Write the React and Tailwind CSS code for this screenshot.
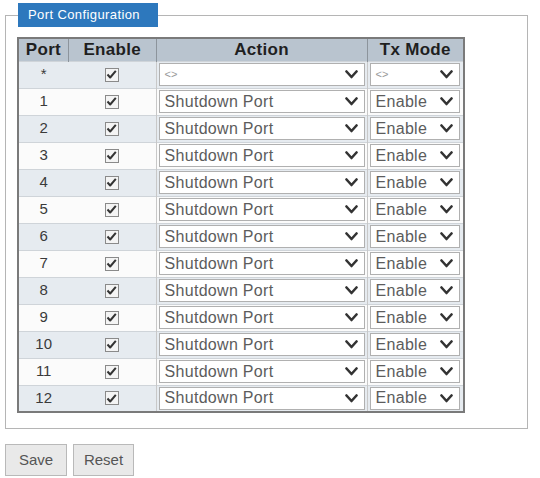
import React from 'react';

const ports = ['*', '1', '2', '3', '4', '5', '6', '7', '8', '9', '10', '11', '12'];

const Chevron = () => (
  <svg className="w-[13px] h-[9px]" viewBox="0 0 13 9" fill="none">
    <polyline points="1.5,1.5 6.5,7 11.5,1.5" stroke="#333" strokeWidth="2.6" strokeLinecap="round" strokeLinejoin="round" />
  </svg>
);

const CheckBox = () => (
  <span className="inline-flex h-[14px] w-[14px] items-center justify-center border border-[#8a8a8a] bg-[#f4f4f4]">
    <svg className="w-[11px] h-[11px]" viewBox="0 0 11 11" fill="none">
      <polyline points="1.5,5.5 4.2,8.5 9.8,1.8" stroke="#333" strokeWidth="2" strokeLinejoin="round" />
    </svg>
  </span>
);

const FakeSelect = ({ value, width, textClass }) => (
  <div className={`flex h-[23px] items-center justify-between border border-[#b0b0b0] bg-white pl-[5px] pr-[6px] ${width}`}>
    <span className={`leading-none ${textClass}`}>{value}</span>
    <Chevron />
  </div>
);

export default function App() {
  return (
    <div className="min-h-screen bg-white px-[5px] pt-[3px] font-['Liberation_Sans',Arial,sans-serif]">
      <fieldset className="w-[523px] border border-[#b5b5b5] pl-[11px] pb-[15px]">
        <legend className="ml-[1px] h-[24px] w-[140px] bg-[#2d78bd] pl-[10px] text-[13px] leading-[24px] tracking-[0.4px] text-white">
          Port Configuration
        </legend>

        <table className="mt-[10px] w-[448px] border-collapse border-2 border-[#7a7a7a]">
          <thead>
            <tr className="h-[23px] bg-[#b9c4cf] text-[17px] font-bold leading-none tracking-[0.3px] text-[#1f1f1f]">
              <th className="w-[51px] border-r border-[#8c949c] p-0">Port</th>
              <th className="w-[89px] border-r border-[#8c949c] p-0">Enable</th>
              <th className="w-[211px] border-r border-[#8c949c] p-0">Action</th>
              <th className="w-[97px] p-0">Tx Mode</th>
            </tr>
          </thead>
          <tbody>
            {ports.map((port, i) => (
              <tr key={port} className={`h-[27px] border-t border-[#cfd4d9] ${i % 2 === 0 ? 'bg-[#e6ebf0]' : 'bg-[#fbfbfb]'}`}>
                <td className="p-0 text-center text-[15px] text-[#3a3a3a]">{port}</td>
                <td className="p-0 text-center">
                  <div className="flex justify-center">
                    <CheckBox />
                  </div>
                </td>
                <td className="border-l border-[#c8c8c8] px-[2px] py-0">
                  <FakeSelect
                    value={port === '*' ? '<>' : 'Shutdown Port'}
                    width="w-[206px]"
                    textClass={port === '*' ? 'text-[11px] text-[#999]' : 'text-[16px] tracking-[0.3px] text-[#5c5c5c]'}
                  />
                </td>
                <td className="border-l border-[#c8c8c8] px-[2px] py-0">
                  <FakeSelect
                    value={port === '*' ? '<>' : 'Enable'}
                    width="w-[90px]"
                    textClass={port === '*' ? 'text-[11px] text-[#999]' : 'text-[16px] tracking-[0.3px] text-[#5c5c5c]'}
                  />
                </td>
              </tr>
            ))}
          </tbody>
        </table>
      </fieldset>

      <div className="mt-[15px] flex gap-[6px]">
        <button className="h-[32px] w-[62px] border border-[#b9b9b9] bg-[#e9e9e9] text-[15px] text-[#555]">Save</button>
        <button className="h-[32px] w-[61px] border border-[#b9b9b9] bg-[#e9e9e9] text-[15px] text-[#555]">Reset</button>
      </div>
    </div>
  );
}
